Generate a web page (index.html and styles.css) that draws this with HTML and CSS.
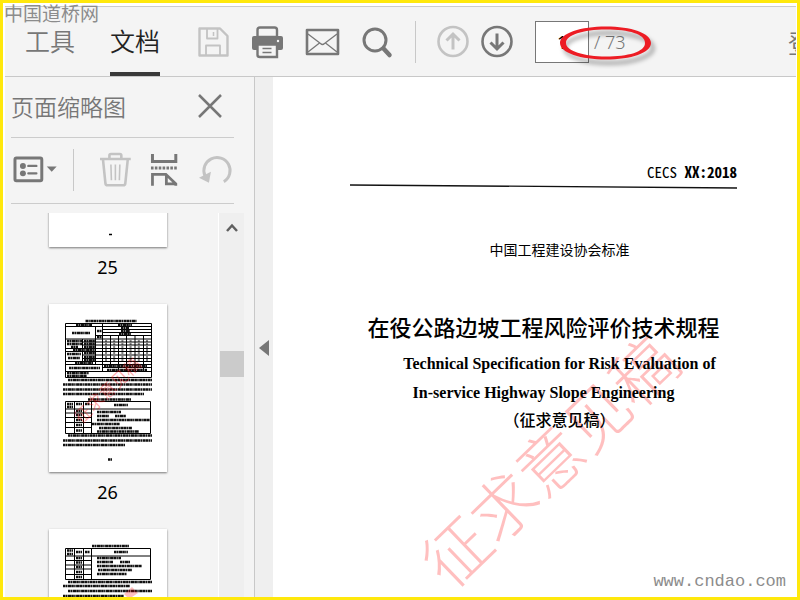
FILE: index.html
```
<!DOCTYPE html>
<html lang="zh-CN">
<head>
<meta charset="utf-8">
<meta name="viewport" content="width=device-width, initial-scale=1">
<title>文档</title>
<link rel="stylesheet" href="styles.css">
</head>
<body>
<div class="app">
  <header class="toolbar">
    <nav class="tabs">
      <a class="tab" href="#tools">工具</a>
      <a class="tab tab-active" href="#document" aria-current="page">文档</a>
    </nav>
    <div class="group">
      <button class="tool muted" type="button" aria-label="保存">
        <svg viewBox="0 0 35 36" fill="none" stroke="currentColor" stroke-width="2.4" stroke-linejoin="round"><path d="M4.5 4.5h20.500l7.500 7.500v19.500h-28z"/><path d="M12 4.500v10h10.500v-10M11 31v-9.500h14v9.500" stroke-width="1.800"/><path d="M18.500 8v4" stroke-width="1.500"/></svg>
      </button>
      <button class="tool" type="button" aria-label="打印">
        <svg viewBox="0 0 35 36"><path d="M4 12h27q2 0 2 2v10q0 2-2 2H4q-2 0-2-2V14q0-2 2-2z" fill="currentColor"/><path d="M7.500 13V6q0-2.500 2.500-2.500h14.500q2.500 0 2.500 2.500v7z" fill="#f4f4f4" stroke="currentColor" stroke-width="2.400"/><path d="M6 13.500h23v7H6z" fill="currentColor"/><path d="M7.500 20.500H27v12.500H10q-2.500 0-2.500-2z" fill="#f4f4f4" stroke="currentColor" stroke-width="2.400"/><path d="M12.500 24.500h9m-9 4h9" stroke="currentColor" stroke-width="1.300"/><circle cx="28" cy="17" r="1.200" fill="#f4f4f4"/></svg>
      </button>
      <button class="tool" type="button" aria-label="发送邮件">
        <svg viewBox="0 0 35 36" fill="none" stroke="currentColor" stroke-linejoin="round"><rect x="2" y="6" width="31" height="24" stroke-width="2.600"/><path d="M3 10l12.500 9.500q2 2 4 0L32 10M3 28l11.500-9M32 28l-11.500-9" stroke-width="1.300"/></svg>
      </button>
      <button class="tool" type="button" aria-label="搜索">
        <svg viewBox="0 0 35 36" fill="none" stroke="currentColor"><circle cx="15" cy="16" r="11" stroke-width="3"/><path d="M23.500 24.500l6 6.500" stroke-width="4.500" stroke-linecap="round"/></svg>
      </button>
    </div>
    <span class="rule"></span>
    <div class="group group-tight">
      <button class="tool muted" type="button" aria-label="上一页">
        <svg viewBox="0 0 35 36" fill="none" stroke="currentColor"><circle cx="17" cy="17.500" r="14.500" stroke-width="2.600"/><path d="M17 25.500V10.500M10.500 16.500l6.500-6.500 6.500 6.500" stroke-width="3"/></svg>
      </button>
      <button class="tool" type="button" aria-label="下一页">
        <svg viewBox="0 0 35 36" fill="none" stroke="currentColor"><circle cx="17" cy="17.500" r="14.500" stroke-width="2.600"/><path d="M17 9.500v15M10.500 18.500l6.500 6.500 6.500-6.500" stroke-width="3"/></svg>
      </button>
    </div>
    <div class="pager">
      <input class="page-input" id="page" type="text" value="1" aria-label="页码">
      <label class="page-total" for="page">/ 73</label>
      <svg class="callout" viewBox="0 0 104 48" fill="none" aria-hidden="true"><ellipse cx="54" cy="27" rx="44" ry="15" stroke="#000" stroke-opacity=".3" stroke-width="4" class="callout-shadow"/><path fill="#ed1c24" fill-rule="evenodd" d="M51 5.500C76 5.500 96 12 96 22S76 38.500 51 38.500 5 32 5 22 26 5.500 51 5.500zM51 8.500C28 8.500 11 14 11 22S29 35.500 51 35.500 90 31 90 22 74 8.500 51 8.500z"/></svg>
    </div>
    <a class="login" href="#login">登</a>
  </header>

  <div class="workspace">
    <aside class="panel">
      <div class="panel-head">
        <h2 class="panel-title">页面缩略图</h2>
        <button class="close" type="button" aria-label="关闭">
          <svg viewBox="0 0 24 24" fill="none" stroke="currentColor" stroke-width="2.500"><path d="M1 1l22 22M23 1L1 23"/></svg>
        </button>
      </div>
      <div class="panel-tools">
        <button class="options" type="button" aria-label="选项">
          <svg viewBox="0 0 46 36"><rect x="4" y="6" width="27" height="23" rx="1.500" fill="none" stroke="currentColor" stroke-width="3"/><circle cx="12" cy="14" r="3" fill="currentColor"/><circle cx="12" cy="21.500" r="3" fill="currentColor"/><path d="M17.500 14h8m-8 7.500h8" stroke="currentColor" stroke-width="2.400" stroke-linecap="round"/><path d="M36 14.500h10l-5 5.500z" fill="currentColor"/></svg>
        </button>
        <span class="rule"></span>
        <button class="tool muted" type="button" aria-label="删除页面">
          <svg viewBox="0 0 35 36" fill="none" stroke="currentColor" stroke-width="2.600"><path d="M2 7h31M11.500 6.500V3.500q0-1.500 1.500-1.500h9q1.500 0 1.500 1.500v3M5 7.500l2.500 24q.2 2 2 2h16q1.800 0 2-2L30 7.500"/><path d="M13 12.500l.5 16M17.500 12.500v16M22 12.500l-.5 16" stroke-width="1.600"/></svg>
        </button>
        <button class="tool" type="button" aria-label="提取页面">
          <svg viewBox="0 0 35 36" fill="none" stroke="currentColor" stroke-width="3"><path d="M4.500 2v7.500h23.500V2"/><path d="M3 16h27" stroke-dasharray="2.600 1.300"/><path d="M4.500 34V22.500H18l10 9.500v2M18.500 23v9H28" stroke-width="2.800"/></svg>
        </button>
        <button class="tool muted" type="button" aria-label="旋转页面">
          <svg viewBox="0 0 35 36"><path d="M6 24A13.200 13.200 0 1 1 25 30" fill="none" stroke="currentColor" stroke-width="3"/><path d="M0 26l12-6-2 11z" fill="currentColor"/></svg>
        </button>
      </div>
      <div class="panel-body">
        <div class="thumbs">
          <figure class="thumb">
            <svg class="sheet" viewBox="0 0 118 168"><path d="M60 155.500h3" stroke="#000" stroke-width="1.500"/></svg>
            <figcaption>25</figcaption>
          </figure>
          <figure class="thumb">
            <svg class="sheet" viewBox="0 0 118 168">
              <g class="grid-lines"><path d="M16.500 19.500h86v54h-86zM16.500 22.500h86M53.500 25.500h49M53.500 28.500h49M46.500 31.500h56M16.500 35h86M33.500 38h69M33.500 41h69M16.500 44.500h86M16.500 47.500h86M33.500 51h69M33.500 54.500h69M16.500 57.500h86M16.500 60.500h86M53.500 63.500h49M16.500 67.500h86M46.500 22.500v38M53.500 19.500v41M33.500 35v22.500M61.500 31.500v29M69.500 31.500v36M77.500 31.500v36M86 31.500v36M94.500 31.500v36M53.500 60.500v7"/><path d="M16.500 97.500h85v32h-85zM16.500 105h85M16.500 109h26M16.500 113.500h26M16.500 118.500h26M16.500 123.500h26M25.500 97.500v32M34.500 97.500v32M42.500 97.500v32"/></g>
              <g class="lines"><path d="M36.500 17h51M27 21h16M69 21h14M72 24h8M72 27h9M70 30h12M23 29h18M48 27h5M48 33h5M18 37h15M18 40h15M22 43h7M35 37h11M35 40h11M35 43h11M24 46h22M18 50h14M19 54h12M35 49h11M35 53h11M35 56h11M26 59h18M20 64h31M55 62h43M58 66h40M18 69h22M18 72h20"/><path d="M19 76h84M14 80.500h89M14 85.500h89M14 90h81M39 95.500h43M18 100h6M27 100h6M36 100h5M65 101h14M18 103h6M48 108h24M48 112h12M66 112h11M48 116h54M43 120h28M50 124h33M48 127.500h42M27 107h6M27 111h6M27 116h6M27 121h6M27 126.500h6M19 131.500h84M14 136.500h89M14 141h62"/><path d="M59 155.500h4"/></g>
              <path class="ticks" d="M56 37h44M56 40h44M56 43h44M56 46h44M56 49h44M56 53h44M56 56h44"/>
              <text class="stamp" x="60" y="92" transform="rotate(-44 60 88)">征求意见稿</text>
            </svg>
            <figcaption>26</figcaption>
          </figure>
          <figure class="thumb">
            <svg class="sheet" viewBox="0 0 118 168">
              <g class="grid-lines"><path d="M16.500 19.500h85v31h-85zM16.500 27h85M16.500 31.500h26M16.500 36h26M16.500 40h26M16.500 45.500h26M25.500 19.500v31M34.500 19.500v31M42.500 19.500v31"/></g>
              <g class="lines"><path d="M43 17h37M18 21.500h6M18 25h6M27 23h6M36 23h5M65 23h14M27 29h6M27 33.500h6M27 38h6M27 43h6M27 48h6M48 29h24M48 33h16M71 33h10M48 37h45M49 41h34M48 45h30"/><path d="M19 53h84M14 57h67M19 62h84M14 67h61"/></g>
              <path d="M75 65l8-7 6 6-9 6z" fill="#f00" fill-opacity=".25"/>
            </svg>
          </figure>
        </div>
        <div class="scrollbar">
          <svg class="scroll-up" viewBox="0 0 12 10" fill="none" stroke="#606060" stroke-width="2.500"><path d="M1 8l5-5.500L11 8"/></svg>
          <div class="scroll-thumb"></div>
        </div>
      </div>
    </aside>
    <button class="collapse" type="button" aria-label="收起面板">
      <svg viewBox="0 0 10 16"><path d="M10 0v16L0 8z" fill="#777"/></svg>
    </button>
    <main class="page">
      <p class="code">CECS <b>XX:2018</b></p>
      <svg class="slope" viewBox="0 0 387 5" preserveAspectRatio="none" aria-hidden="true"><path d="M0 1l387 3" stroke="#111" stroke-width="1.300"/></svg>
      <p class="issuer">中国工程建设协会标准</p>
      <h1 class="title">在役公路边坡工程风险评价技术规程</h1>
      <p class="english indent">Technical Specification for Risk Evaluation of</p>
      <p class="english">In-service Highway Slope Engineering</p>
      <p class="draft indent">（征求意见稿）</p>
      <span class="watermark">征求意见稿</span>
    </main>
  </div>
  <span class="mark mark-top">中国道桥网</span>
  <span class="mark mark-bottom">www.cndao.com</span>
</div>
</body>
</html>
```
FILE: styles.css
```
* { box-sizing: border-box; }

body {
  margin: 0;
  font-family: "Noto Sans", "Noto Sans CJK SC", sans-serif;
  color: #000;
}

p, h1, h2, figure { margin: 0; }

button {
  padding: 0;
  border: 0;
  background: none;
  color: #777;
}

svg { display: block; }

.app {
  position: relative;
  display: flex;
  flex-direction: column;
  height: 100vh;
  padding: 3px 1px 0 2px;
  border: 3px solid #ffe80c;
  background: #fff;
  overflow: hidden;
}

/* Toolbar */
.toolbar {
  display: flex;
  flex: none;
  align-items: center;
  gap: 20px;
  height: 71px;
  padding-left: 20px;
  border-top: 1px solid #ccc;
  border-bottom: 1px solid #c8c8c8;
  background: #f4f4f4;
  overflow: hidden;
}

.tabs {
  display: flex;
  align-self: stretch;
  gap: 35px;
  margin-right: 15px;
}

.tab {
  display: flex;
  align-items: center;
  height: 69px;
  border-bottom: 4px solid transparent;
  font-family: "Noto Sans CJK SC", sans-serif;
  font-size: 25px;
  font-weight: 350;
  color: #777;
  text-decoration: none;
}

.tab-active {
  border-color: #393939;
  color: #222;
}

.group { display: flex; gap: 20px; }
.group-tight { gap: 9px; }

.tool { width: 35px; height: 36px; }
.muted { color: #c3c3c3; }

.rule {
  width: 1px;
  height: 42px;
  background: #c8c8c8;
}

.pager {
  position: relative;
  display: flex;
  align-items: center;
  gap: 5px;
}

.page-input {
  width: 54px;
  height: 42px;
  padding: 0;
  border: 1px solid #777;
  border-radius: 0;
  background: #fff;
  font-family: "Noto Sans", sans-serif;
  font-size: 18px;
  text-align: center;
}

.page-total {
  font-size: 18px;
  font-weight: 300;
  color: #777;
}

.callout {
  position: absolute;
  left: 20px;
  top: 0;
  width: 104px;
  height: 48px;
}

.callout-shadow { filter: blur(2px); }

.login {
  width: 8px;
  margin-left: auto;
  font-family: "Noto Sans CJK SC", sans-serif;
  font-size: 25px;
  font-weight: 350;
  color: #777;
  text-decoration: none;
  white-space: nowrap;
}

/* Thumbnail panel */
.workspace {
  display: flex;
  flex: 1;
  min-height: 0;
}

.panel {
  display: flex;
  flex: none;
  flex-direction: column;
  width: 250px;
  border-right: 1px solid #c8c8c8;
  background: #f4f4f4;
}

.panel-head {
  display: flex;
  align-items: center;
  justify-content: space-between;
  height: 61px;
  margin: 0 20px 0 6px;
  padding: 0 12px 2px 0;
  border-bottom: 1px solid #ccc;
}

.panel-title {
  font-family: "Noto Sans CJK SC", sans-serif;
  font-size: 23px;
  font-weight: 350;
  color: #777;
}

.close { width: 24px; height: 24px; }

.panel-tools {
  display: flex;
  align-items: center;
  gap: 16px;
  height: 66px;
  margin: 0 20px 0 6px;
  padding-bottom: 2px;
  border-bottom: 1px solid #ccc;
}

.panel-tools .rule { margin-right: 8px; }

.options { width: 46px; height: 36px; }

.panel-body {
  display: flex;
  flex: 1;
  min-height: 0;
  margin: 9px 10px 0 0;
}

/* The list is scrolled partway past the first sheet. */
.thumbs {
  display: flex;
  flex: 1;
  flex-direction: column;
  justify-content: flex-start;
  align-items: center;
  overflow: hidden;
  padding-right: 8px;
  border-right: 1px solid #fff;
}

.thumb:first-child { margin-top: -134px; }

.sheet {
  width: 118px;
  height: 168px;
  background: #fff;
  box-shadow: 0 1px 2px #777;
}

.thumb figcaption {
  height: 57px;
  padding-top: 8px;
  font-size: 18px;
  line-height: 25px;
  text-align: center;
}

.grid-lines { fill: none; stroke: #000; stroke-width: 1; }
.lines { fill: none; stroke: #111; stroke-width: 2.3; stroke-dasharray: 2.5 0.4 1.4 0.5 3.2 0.3; }
.ticks { fill: none; stroke: #000; stroke-width: 1; stroke-dasharray: 2 6.2; }

.stamp {
  font-family: "Noto Sans CJK SC", sans-serif;
  font-size: 17px;
  font-weight: 400;
  fill: #f00;
  fill-opacity: 0.35;
  text-anchor: middle;
}

.scrollbar {
  display: flex;
  flex-direction: column;
  align-items: center;
  width: 25px;
  background: #efefef;
}

.scroll-up { width: 12px; height: 10px; margin-top: 10px; }

.scroll-thumb {
  width: 24px;
  height: 26px;
  margin-top: 118px;
  background: #cbcbcb;
}

.collapse {
  display: flex;
  align-items: center;
  justify-content: center;
  width: 18px;
  padding-top: 22px;
  background: #efefef;
}

.collapse svg { width: 10px; height: 16px; }

/* Document page */
.page {
  position: relative;
  z-index: 0;
  display: flex;
  flex: 1;
  flex-direction: column;
  padding: 84px 59px 0 77px;
  background: #fff;
  text-align: center;
}

.code {
  font-family: "Noto Sans Mono CJK SC", "Liberation Mono", monospace;
  font-size: 15px;
  line-height: 22px;
  text-align: right;
}

.slope { width: 100%; height: 5px; margin-top: 1px; }

.issuer {
  margin-top: 49px;
  padding-left: 32px;
  font-family: "Noto Sans CJK SC", sans-serif;
  font-size: 14px;
  line-height: 22px;
}

.title {
  margin-top: 50px;
  font-family: "Noto Sans CJK SC", sans-serif;
  font-size: 22px;
  font-weight: 500;
  line-height: 32px;
  white-space: nowrap;
}

.english {
  margin-top: 5px;
  font-family: "Liberation Serif", serif;
  font-size: 16px;
  font-weight: 700;
  line-height: 24px;
  white-space: nowrap;
}

.title + .english { margin-top: 10px; }

.indent { padding-left: 32px; }

.draft {
  margin-top: 2px;
  font-family: "Noto Sans CJK SC", sans-serif;
  font-size: 16px;
  font-weight: 500;
  line-height: 24px;
}

.watermark {
  position: absolute;
  z-index: -1;
  left: 275px;
  top: 382px;
  font-family: "Noto Sans CJK SC", sans-serif;
  font-size: 65px;
  font-weight: 300;
  line-height: 1;
  white-space: nowrap;
  color: rgba(255, 0, 0, 0.25);
  transform: translate(-50%, -50%) rotate(-44deg);
}

/* Site marks laid over the window */
.mark {
  position: absolute;
  color: #8c8c8c;
  line-height: 22px;
}

.mark-top {
  left: 1px;
  top: -1px;
  font-family: "Noto Sans CJK SC", sans-serif;
  font-size: 19px;
}

.mark-bottom {
  right: 11px;
  bottom: 4px;
  font-family: "Liberation Mono", monospace;
  font-size: 17px;
}
```
